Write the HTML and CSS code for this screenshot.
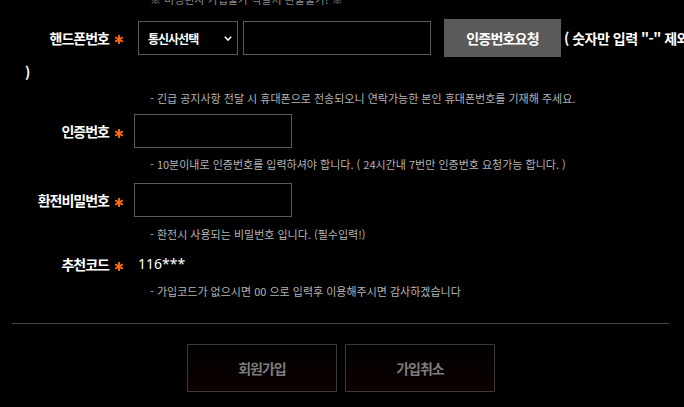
FILE: index.html
```html
<!DOCTYPE html>
<html lang="ko">
<head>
<meta charset="utf-8">
<title>회원가입</title>
<link rel="stylesheet" href="styles.css">
</head>
<body>
<div class="form">
  <p class="note">※ 미성년자 가입불가 적발시 환불불가! ※</p>

  <div class="phone-row">
    <span class="label">핸드폰번호</span><span class="req"><svg viewBox="0 0 8 9" width="8" height="9"><g stroke="#ff6a13" stroke-width="1.9"><line x1="4" y1="0" x2="4" y2="9"/><line x1="0.2" y1="2.3" x2="7.8" y2="6.7"/><line x1="0.2" y1="6.7" x2="7.8" y2="2.3"/></g></svg></span><span class="select-wrap"><select class="select"><option>통신사선택</option></select><svg class="chev" viewBox="0 0 8 5" width="8" height="5"><polyline points="0.8,0.8 4,4 7.2,0.8" fill="none" stroke="#fff" stroke-width="1.6"/></svg></span><input class="input phone-input" type="text"><button class="btn-gray" type="button">인증번호요청</button><span class="tail">( 숫자만 입력 "-" 제외<br>)</span>
  </div>
  <p class="hint first">- 긴급 공지사항 전달 시 휴대폰으로 전송되오니 연락가능한 본인 휴대폰번호를 기재해 주세요.</p>

  <div class="field-row r2">
    <span class="flabel">인증번호</span><span class="req"><svg viewBox="0 0 8 9" width="8" height="9"><g stroke="#ff6a13" stroke-width="1.9"><line x1="4" y1="0" x2="4" y2="9"/><line x1="0.2" y1="2.3" x2="7.8" y2="6.7"/><line x1="0.2" y1="6.7" x2="7.8" y2="2.3"/></g></svg></span><input class="input short" type="text">
  </div>
  <p class="hint h2">- 10분이내로 인증번호를 입력하셔야 합니다. ( 24시간내 7번만 인증번호 요청가능 합니다. )</p>

  <div class="field-row r3">
    <span class="flabel">환전비밀번호</span><span class="req"><svg viewBox="0 0 8 9" width="8" height="9"><g stroke="#ff6a13" stroke-width="1.9"><line x1="4" y1="0" x2="4" y2="9"/><line x1="0.2" y1="2.3" x2="7.8" y2="6.7"/><line x1="0.2" y1="6.7" x2="7.8" y2="2.3"/></g></svg></span><input class="input short" type="password">
  </div>
  <p class="hint h3">- 환전시 사용되는 비밀번호 입니다. (필수입력!)</p>

  <div class="field-row r4">
    <span class="flabel">추천코드</span><span class="req"><svg viewBox="0 0 8 9" width="8" height="9"><g stroke="#ff6a13" stroke-width="1.9"><line x1="4" y1="0" x2="4" y2="9"/><line x1="0.2" y1="2.3" x2="7.8" y2="6.7"/><line x1="0.2" y1="6.7" x2="7.8" y2="2.3"/></g></svg></span><span class="code">116***</span>
  </div>
  <p class="hint h4">- 가입코드가 없으시면 00 으로 입력후 이용해주시면 감사하겠습니다</p>

  <hr class="divider">

  <div class="actions">
    <button class="btn-dark" type="button">회원가입</button>
    <button class="btn-dark" type="button">가입취소</button>
  </div>
</div>
</body>
</html>
```

FILE: styles.css
```css
html {
  overflow: hidden;
  background: #000;
}
body {
  margin: 0;
  background: #000;
  color: #fff;
  font-family: "Noto Sans CJK KR", "Noto Sans", sans-serif;
}
.form {
  width: 720px;
}
.note {
  margin: -8px 0 0 150px;
  font-size: 11px;
  line-height: 14px;
  color: #8a8a8a;
  white-space: nowrap;
}

/* phone row: inline flow; the tail's closing bracket drops to the row edge */
.phone-row {
  margin-top: 13px;
  padding-left: 25px;
  width: 695px;
  font-size: 14px;
  line-height: 26px;
  font-weight: 700;
  letter-spacing: -1px;
  white-space: nowrap;
}
.phone-row > * {
  vertical-align: middle;
}
.label {
  display: inline-block;
  width: 84px;
  text-align: right;
}
.req {
  display: inline-block;
  width: 8px;
  height: 9px;
  margin-left: 6px;
  line-height: 0;
}
.req svg {
  display: block;
}
.phone-row .req {
  margin-right: 15px;
  position: relative;
  top: 1px;
}
.select-wrap {
  position: relative;
  display: inline-block;
  width: 100px;
  height: 34px;
}
.select {
  appearance: none;
  -webkit-appearance: none;
  width: 100px;
  height: 34px;
  margin: 0;
  padding: 0 0 0 9px;
  background: #000;
  color: #fff;
  border: 1px solid #5a5a5a;
  border-radius: 0;
  font-family: "Noto Sans CJK KR", sans-serif;
  font-size: 12px;
  font-weight: 700;
  letter-spacing: -1px;
  outline: none;
}
.chev {
  position: absolute;
  right: 6px;
  top: 15px;
}
.input {
  height: 34px;
  margin: 0;
  padding: 0 6px;
  box-sizing: border-box;
  background: #000;
  color: #fff;
  border: 1px solid #5a5a5a;
  border-radius: 0;
  outline: none;
}
.phone-input {
  width: 188px;
  margin-left: 5px;
}
.btn-gray {
  width: 117px;
  height: 38px;
  margin-left: 13px;
  padding: 0;
  border: 0;
  background: #5a5a5a;
  color: #fff;
  font-family: "Noto Sans CJK KR", sans-serif;
  font-size: 14px;
  font-weight: 700;
  letter-spacing: -0.8px;
}
.tail {
  margin-left: 3px;
  letter-spacing: -0.5px;
}

/* other rows: label column / asterisk / field */
.field-row {
  display: grid;
  grid-template-columns: 109px 25px auto;
  align-items: center;
  justify-content: start;
}
.flabel {
  text-align: right;
  font-size: 14px;
  font-weight: 700;
  letter-spacing: -1px;
  line-height: 20px;
}
.field-row .req {
  position: relative;
  top: 2px;
}
.short {
  width: 158px;
}
.code {
  padding-left: 4px;
  font-family: "Noto Sans", sans-serif;
  font-size: 14px;
  line-height: 20px;
}

.hint {
  margin: 0;
  padding-left: 150px;
  font-size: 11px;
  line-height: 14px;
  color: #b4b4b4;
  white-space: nowrap;
}
.hint.first { margin-top: 6px; }
.r2 { margin-top: 9px; }
.hint.h2 { margin-top: 9px; }
.r3 { margin-top: 12px; }
.hint.h3 { margin-top: 10px; }
.r4 { margin-top: 13px; }
.hint.h4 { margin-top: 10px; }

.divider {
  margin: 25px 0 0 12px;
  width: 657px;
  height: 0;
  border: 0;
  border-top: 1px solid #464646;
}
.actions {
  display: flex;
  gap: 8px;
  margin-top: 20px;
  padding-left: 187px;
}
.btn-dark {
  width: 150px;
  height: 48px;
  padding: 0;
  border: 1px solid #3a3a3a;
  background: linear-gradient(to bottom, #000 0%, #0e0000 100%);
  color: #7c7c7c;
  font-family: "Noto Sans CJK KR", sans-serif;
  font-size: 14px;
  font-weight: 700;
  letter-spacing: -1px;
}
```
